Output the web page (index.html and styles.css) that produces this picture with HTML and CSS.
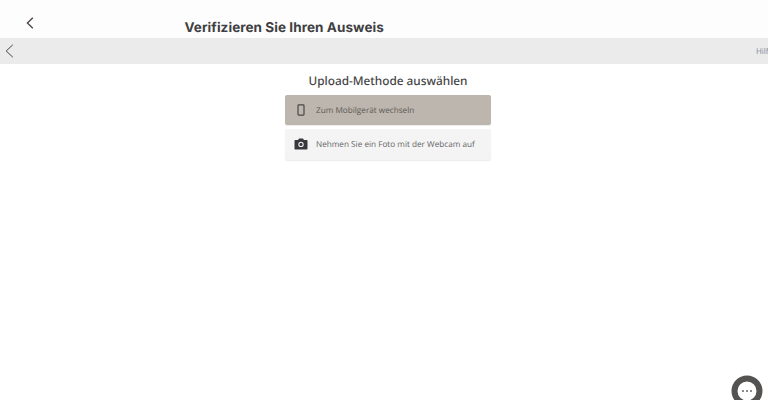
FILE: index.html
```html
<!DOCTYPE html>
<html lang="de">
<head>
<meta charset="utf-8">
<title>Verifizieren Sie Ihren Ausweis</title>
<link rel="stylesheet" href="styles.css">
</head>
<body>
<header class="header">
  <svg class="back-top" width="8" height="12" viewBox="0 0 8 12"><path d="M6.800.8 1.400 6l5.400 5.200" fill="none" stroke="#4a4048" stroke-width="1.300"/></svg>
  <h1 class="title">Verifizieren Sie Ihren Ausweis</h1>
</header>
<nav class="bar">
  <svg class="back-bar" width="9" height="14" viewBox="0 0 9 14"><path d="M7.800.8 1.200 7l6.600 6.200" fill="none" stroke="#444" stroke-width="1"/></svg>
  <span class="help">Hilfe</span>
</nav>
<main class="main">
  <h2 class="heading">Upload-Methode auswählen</h2>
  <button class="option option-active">
    <svg class="icon" width="18" height="18" viewBox="0 0 18 18"><rect x="6" y="3.900" width="6" height="10.200" rx=".8" fill="none" stroke="#4a4844" stroke-width="1.200"/></svg>
    <span class="option-label">Zum Mobilgerät wechseln</span>
  </button>
  <button class="option">
    <svg class="icon" width="18" height="18" viewBox="0 0 18 18"><path fill="#38383c" d="M7 3.500h4l.9 1.400h2.600c.6 0 1 .4 1 1v7.600c0 .6-.4 1-1 1h-11c-.6 0-1-.4-1-1V5.900c0-.6.4-1 1-1h2.600z"/><circle cx="9" cy="9.400" r="2.700" fill="#f4f4f4"/><circle cx="9" cy="9.400" r="1.600" fill="#38383c"/></svg>
    <span class="option-label">Nehmen Sie ein Foto mit der Webcam auf</span>
  </button>
</main>
<div class="chat">
  <svg width="32" height="32" viewBox="0 0 32 32"><circle cx="16" cy="16" r="12.500" fill="#fff" stroke="#555252" stroke-width="6"/><path d="M7 25l-1 5 7-3z" fill="#555252"/><circle cx="12" cy="16" r="1" fill="#666"/><circle cx="16" cy="16" r="1" fill="#666"/><circle cx="20" cy="16" r="1" fill="#666"/></svg>
</div>
</body>
</html>
```

FILE: styles.css
```css
* { box-sizing: border-box; }
html, body { margin: 0; height: 100%; overflow: hidden; }
body { background: #fff; color: #333; font-family: "Open Sans", sans-serif; text-rendering: geometricPrecision; }
.header { height: 38px; background: #fdfdfd; display: flex; align-items: flex-start; }
.back-top { margin: 17px 0 0 26px; }
.title { margin: 19.500px 0 0 150.500px; font: 700 13.500px/17px Inter, sans-serif; letter-spacing: .07px; color: #3f3f43; white-space: nowrap; }
.bar { height: 26px; background: #ebebeb; display: flex; align-items: center; justify-content: space-between; overflow: hidden; }
.back-bar { margin: -1px 0 0 5px; }
.help { font-size: 8px; color: #7d8a9c; margin-right: -5px; }
.main { display: flex; flex-direction: column; align-items: center; padding-left: 8px; }
.heading { margin: 9px 0 4.500px; font: 500 11.800px/17px "Noto Sans", sans-serif; color: #454545; }
.option { width: 206px; height: 30.500px; margin-bottom: 4px; padding: 0 0 0 6.500px; border: 0; border-radius: 2px; display: flex; align-items: center; gap: 6.500px; font: 400 8.200px "Open Sans", sans-serif; text-rendering: geometricPrecision; color: #666; background: #f4f4f4; box-shadow: 0 1px 1px rgba(0,0,0,.08); text-align: left; }
.option-label { padding-top: 1px; }
.option-active { background: #bcb6ae; color: #5c5954; }
.chat { position: absolute; left: 730.500px; top: 375px; width: 32px; height: 32px; }
```
